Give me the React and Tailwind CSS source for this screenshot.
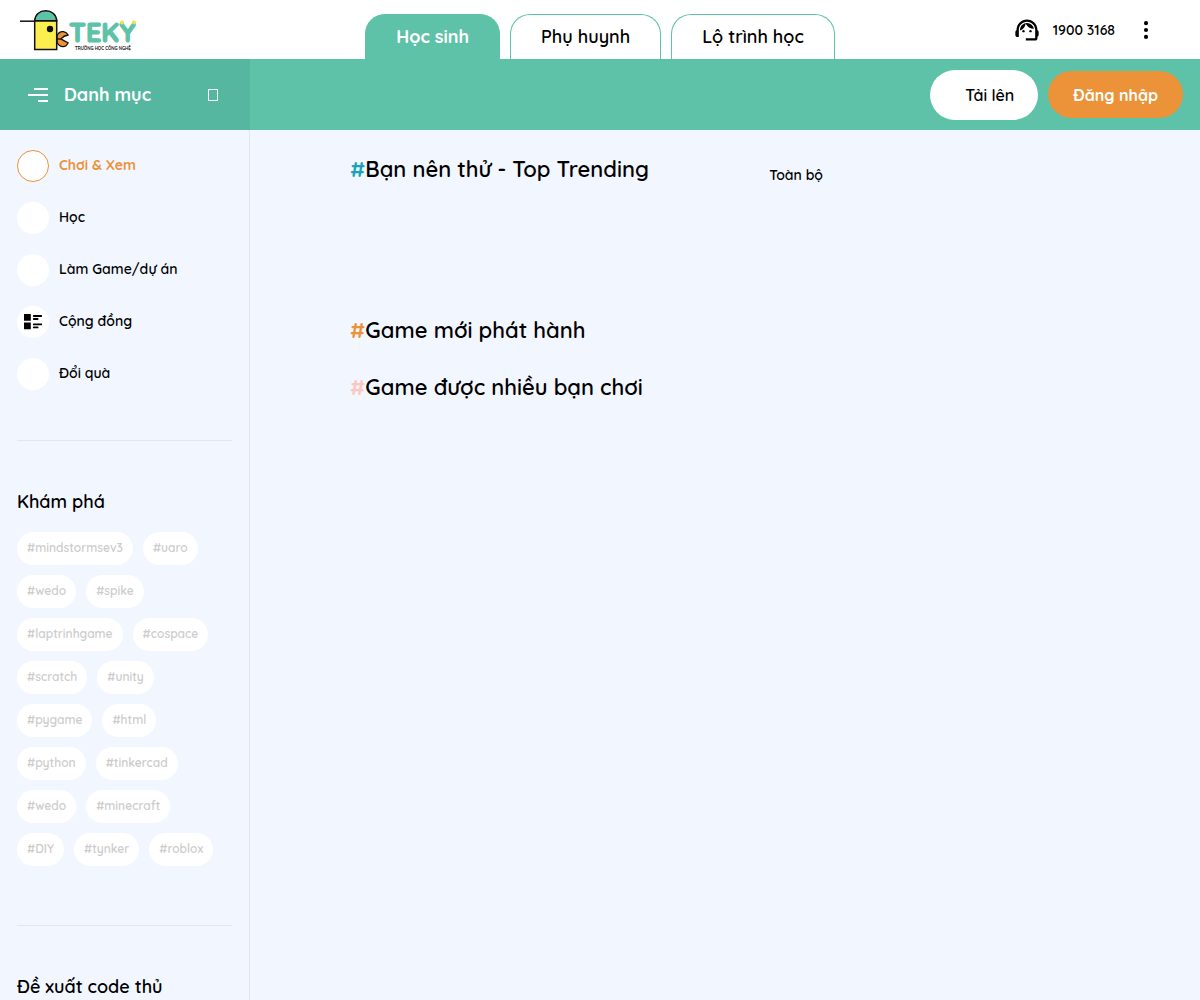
import React, { useState } from 'react';
import { MdSupportAgent } from 'react-icons/md';
import { BsThreeDotsVertical } from 'react-icons/bs';

const TABS = ['Học sinh', 'Phụ huynh', 'Lộ trình học'];

const MENU = [
  { name: 'Chơi & Xem' },
  { name: 'Học' },
  { name: 'Làm Game/dự án' },
  { name: 'Cộng đồng', icon: true },
  { name: 'Đổi quà' },
];

const TAG_ROWS = [
  ['mindstormsev3', 'uaro'],
  ['wedo', 'spike'],
  ['laptrinhgame', 'cospace'],
  ['scratch', 'unity'],
  ['pygame', 'html'],
  ['python', 'tinkercad'],
  ['wedo', 'minecraft'],
  ['DIY', 'tynker', 'roblox'],
];

function Logo() {
  return (
    <svg width="120" height="44" viewBox="0 0 120 44" role="img" aria-label="Teky">
      <path d="M37 25.500c1.500-3 4-4.200 6.500-3.800 2 .4 3.600 1.500 4.700 3.300-2.800.4-5.200 1.500-7.200 3.900 2.200 1.500 4.500 2.600 7.200 3.900-1.300 2.600-3.200 4-5.200 3.900-2.600-.2-4.700-1.700-6-4.200z" fill="#ec9238" stroke="#111" strokeWidth="1.300" strokeLinejoin="round" />
      <path d="M37 29h4" stroke="#111" strokeWidth="1.300" />
      <path d="M14.700 10.800v28.700h22V10.800z" fill="#fcee4e" stroke="#111" strokeWidth="1.500" />
      <path d="M14.700 10.800C15 4.500 19.500.8 25.700.8s10.700 3.700 11 10z" fill="#5ec2a8" stroke="#111" strokeWidth="1.500" />
      <path d="M0 11.200h15" stroke="#111" strokeWidth="1.500" />
      <circle cx="30" cy="19" r="3.200" fill="#111" />
      <text x="49" y="31.500" fontSize="27" fontWeight="700" fill="#5ec2a8" stroke="#5ec2a8" strokeWidth="1.200">TEKY</text>
      <circle cx="102" cy="12.500" r="2" fill="#e9e34c" />
      <circle cx="114" cy="12.500" r="2" fill="#e9e34c" />
      <text x="55" y="39.500" fontSize="4.400" fontWeight="700" fill="#111">TRƯỜNG HỌC CÔNG NGHỆ</text>
    </svg>
  );
}

function ListIcon() {
  return (
    <svg width="18" height="16" viewBox="0 0 18 16" fill="none">
      <path d="M0 0h6.800v6.800H0zM0 8.500h6.800v6.800H0z" fill="#000" />
      <path d="M9.800 2h7.600M9.800 5h3.800M9.800 10.400h7.600M9.800 13.400h3.800" stroke="#000" strokeWidth="1.900" strokeLinecap="round" />
    </svg>
  );
}

function Header({ tab, setTab }) {
  return (
    <header className="grid grid-cols-[1fr_auto_1fr] h-[59px] bg-white">
      <a href="#" className="pl-5 pt-[10px]"><Logo /></a>
      <nav className="flex items-end gap-[10px]">
        {TABS.map(t => (
          <button
            key={t}
            onClick={() => setTab(t)}
            className={`h-[45px] px-[30px] rounded-t-[20px] border border-b-0 border-[#5ec2a8] text-lg ${t === tab ? 'bg-[#5ec2a8] text-white font-bold' : 'bg-white text-black font-semibold'}`}
          >
            {t}
          </button>
        ))}
      </nav>
      <div className="flex items-center justify-end pr-[43px]">
        <MdSupportAgent size={28} />
        <a href="tel:19003168" className="ml-3 text-sm font-semibold">1900 3168</a>
        <button aria-label="Menu" className="ml-5"><BsThreeDotsVertical size={22} /></button>
      </div>
    </header>
  );
}

function Toolbar() {
  return (
    <div className="flex h-[71px] bg-[#5ec2a8]">
      <div className="w-[250px] shrink-0 flex items-center pl-7 pr-8 bg-[#55b79f] text-white">
        <svg width="20" height="16" viewBox="0 0 20 16" stroke="#fff" strokeWidth="2">
          <path d="M6 2h14M0 8h20M10 14h10" />
        </svg>
        <h2 className="ml-4 text-lg font-bold">Danh mục</h2>
        <button aria-label="Thu gọn" className="ml-auto w-[10px] h-3 border border-white"></button>
      </div>
      <div className="flex-1 flex items-center justify-end gap-[10px] pr-[17px]">
        <button className="h-[50px] pl-[35px] pr-6 rounded-full bg-white text-black font-semibold">Tải lên</button>
        <button className="h-[47px] px-[25px] rounded-full bg-[#ec9238] text-white font-bold">Đăng nhập</button>
      </div>
    </div>
  );
}

function Sidebar() {
  const [active, setActive] = useState('Chơi & Xem');

  return (
    <aside className="w-[250px] shrink-0 border-r border-[#e4e6ea] px-[17px] pt-5">
      <ul className="flex flex-col gap-5 pb-[50px] border-b border-[#e4e6ea]">
        {MENU.map(m => (
          <li key={m.name}>
            <button
              onClick={() => setActive(m.name)}
              className={`flex items-start gap-[10px] text-sm leading-[30px] ${m.name === active ? 'text-[#ec9238] font-bold' : 'text-black font-semibold'}`}
            >
              <span className={`w-8 h-8 rounded-full bg-white flex items-center justify-center ${m.name === active ? 'border border-[#ec9238]' : ''}`}>
                {m.icon && <ListIcon />}
              </span>
              {m.name}
            </button>
          </li>
        ))}
      </ul>

      <section className="pt-[47px] pb-[59px] border-b border-[#e4e6ea]">
        <h3 className="text-lg font-semibold">Khám phá</h3>
        <div className="flex flex-col gap-[10px] mt-4">
          {TAG_ROWS.map((row, i) => (
            <div key={i} className="flex gap-[10px]">
              {row.map(tag => (
                <a key={tag} href="#" className="h-[33px] px-[10px] rounded-full bg-white text-xs leading-[32px] font-semibold text-[#cccccc]">#{tag}</a>
              ))}
            </div>
          ))}
        </div>
      </section>

      <h3 className="pt-[47px] text-lg font-semibold">Đề xuất code thủ</h3>
    </aside>
  );
}

function Heading({ color, children }) {
  return (
    <h2 className="text-[22px] leading-7 font-semibold text-black">
      <span className={`font-bold ${color}`}>#</span>{children}
    </h2>
  );
}

export default function App() {
  const [tab, setTab] = useState('Học sinh');

  return (
    <div className="h-screen overflow-hidden flex flex-col bg-[#f1f6ff] text-black font-['Quicksand','Inter',sans-serif]">
      <Header tab={tab} setTab={setTab} />
      <Toolbar />
      <div className="flex-1 flex min-h-0">
        <Sidebar />
        <main className="flex-1 pl-[100px] pt-[25px]">
          <div className="flex items-end justify-between max-w-[473px]">
            <Heading color="text-[#1ba3b8]">Bạn nên thử - Top Trending</Heading>
            <a href="#" className="text-sm leading-4 font-semibold">Toàn bộ</a>
          </div>
          <div className="flex flex-col gap-[29px] mt-[133px]">
            <Heading color="text-[#ec9238]">Game mới phát hành</Heading>
            <Heading color="text-[#ffc5c0]">Game được nhiều bạn chơi</Heading>
          </div>
        </main>
      </div>
    </div>
  );
}
